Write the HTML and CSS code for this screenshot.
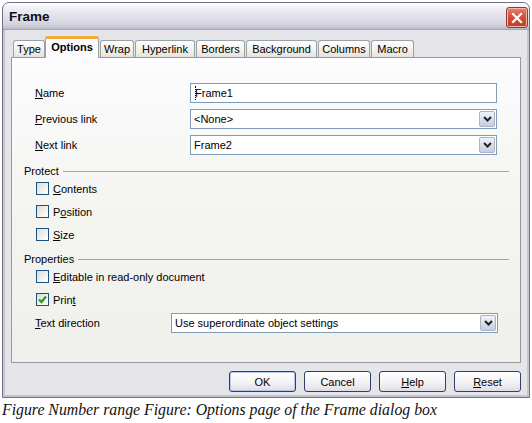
FILE: index.html
```html
<!DOCTYPE html>
<html>
<head>
<meta charset="utf-8">
<title>Frame</title>
<link rel="stylesheet" href="styles.css">
</head>
<body>
<div class="window">
  <div class="titlebar">
    <span class="title">Frame</span>
    <div class="close"><svg class="close-x" width="12" height="12" viewBox="0 0 12 12"><path d="M2 2 L10 10 M10 2 L2 10" stroke="#ffffff" stroke-width="2.2" stroke-linecap="square"/></svg></div>
  </div>
  <div class="client">
    <div class="tabs">
      <div class="tab w-type">Type</div>
      <div class="tab w-options active">Options</div>
      <div class="tab w-wrap">Wrap</div>
      <div class="tab w-hyper">Hyperlink</div>
      <div class="tab w-borders">Borders</div>
      <div class="tab w-bg">Background</div>
      <div class="tab w-cols">Columns</div>
      <div class="tab w-macro">Macro</div>
    </div>
    <div class="panel">
      <div class="field-row">
        <span class="lbl"><u>N</u>ame</span>
        <div class="textbox"><span class="caret"></span>Frame1</div>
      </div>
      <div class="field-row">
        <span class="lbl"><u>P</u>revious link</span>
        <div class="combo"><span class="combo-text">&lt;None&gt;</span><span class="drop"><svg width="9" height="6" viewBox="0 0 9 6"><path d="M1 1 L4.5 4.5 L8 1" fill="none" stroke="#222" stroke-width="2"/></svg></span></div>
      </div>
      <div class="field-row">
        <span class="lbl"><u>N</u>ext link</span>
        <div class="combo"><span class="combo-text">Frame2</span><span class="drop"><svg width="9" height="6" viewBox="0 0 9 6"><path d="M1 1 L4.5 4.5 L8 1" fill="none" stroke="#222" stroke-width="2"/></svg></span></div>
      </div>

      <div class="group-head protect"><span>Protect</span><span class="rule"></span></div>
      <div class="check-row"><span class="cb"></span><span><u>C</u>ontents</span></div>
      <div class="check-row"><span class="cb"></span><span>P<u>o</u>sition</span></div>
      <div class="check-row"><span class="cb"></span><span><u>S</u>ize</span></div>

      <div class="group-head props"><span>Properties</span><span class="rule"></span></div>
      <div class="check-row"><span class="cb"></span><span><u>E</u>ditable in read-only document</span></div>
      <div class="check-row"><span class="cb checked"><svg width="11" height="11" viewBox="0 0 11 11"><path d="M2 5.5 L4.5 8 L9 2.5" fill="none" stroke="#21a121" stroke-width="2.2"/></svg></span><span>Prin<u>t</u></span></div>
      <div class="field-row dir-row">
        <span class="lbl lbl-dir"><u>T</u>ext direction</span>
        <div class="combo"><span class="combo-text">Use superordinate object settings</span><span class="drop"><svg width="9" height="6" viewBox="0 0 9 6"><path d="M1 1 L4.5 4.5 L8 1" fill="none" stroke="#222" stroke-width="2"/></svg></span></div>
      </div>
    </div>
    <div class="buttons">
      <span class="btn default">OK</span>
      <span class="btn">Cancel</span>
      <span class="btn"><u>H</u>elp</span>
      <span class="btn"><u>R</u>eset</span>
    </div>
  </div>
</div>
<p class="caption">Figure Number range Figure: Options page of the Frame dialog box</p>
</body>
</html>
```

FILE: styles.css
```css
html, body {
  margin: 0;
  padding: 0;
  background: #ffffff;
}
body {
  width: 532px;
  height: 423px;
  overflow: hidden;
  font-family: "Liberation Sans", Arial, sans-serif;
  font-size: 11px;
  color: #000;
}
.window {
  margin: 2px 0 0 2px;
  width: 528px;
  height: 396px;
  box-sizing: border-box;
  border: 1px solid #6f6f88;
  border-radius: 7px 7px 0 0;
  background: #c6c6d3;
  display: flex;
  flex-direction: column;
  overflow: hidden;
}
.titlebar {
  height: 27px;
  flex: none;
  box-sizing: border-box;
  display: flex;
  align-items: center;
  justify-content: space-between;
  padding: 0 1px 0 6px;
  background: linear-gradient(#fdfdfe 0%, #ececf2 25%, #dedee7 60%, #d2d2dd 85%, #b9b9c9 100%);
  border-bottom: 1px solid #a3a3b6;
}
.title {
  font-weight: bold;
  font-size: 13.5px;
  color: #101018;
  padding-top: 1px;
}
.close {
  width: 22px;
  height: 21px;
  flex: none;
  box-sizing: border-box;
  margin-top: 3px;
  border: 1px solid #8c3a40;
  border-radius: 3px;
  background: linear-gradient(#e8826c 0%, #d5503f 45%, #c03a2a 100%);
  box-shadow: inset 0 0 0 1px #f2b8ac;
  display: flex;
  align-items: center;
  justify-content: center;
}
.close-x {
  display: block;
}
.client {
  flex: 1;
  margin: 0 2px 2px;
  background: #e5e4e9;
  padding: 7px 6px 0 6px;
  display: flex;
  flex-direction: column;
}
.tabs {
  height: 20px;
  display: flex;
  align-items: flex-end;
  gap: 1px;
  padding-left: 2px;
  position: relative;
  z-index: 1;
}
.tab {
  height: 17px;
  box-sizing: border-box;
  border: 1px solid #9aa2a8;
  border-bottom: none;
  border-radius: 3px 3px 0 0;
  background: linear-gradient(#ffffff, #f0efea 60%, #e4e3dd);
  text-align: center;
  line-height: 16px;
  color: #000;
}
.tab.active {
  height: 22px;
  margin-bottom: -1px;
  margin-left: -1px;
  background: #fcfcfe;
  border-top: 3px solid #f3a83a;
  font-weight: bold;
  line-height: 17px;
}
.w-type { width: 32px; }
.w-options { width: 54px; }
.w-wrap { width: 34px; }
.w-hyper { width: 60px; }
.w-borders { width: 49px; }
.w-bg { width: 71px; }
.w-cols { width: 52px; }
.w-macro { width: 43px; }

.panel {
  height: 306px;
  box-sizing: border-box;
  border: 1px solid #919b9c;
  background: linear-gradient(#fcfcfe, #f4f4f1 50%, #efefeb);
  padding: 25px 11px 0 12px;
  display: flex;
  flex-direction: column;
}
.field-row {
  display: flex;
  align-items: center;
  height: 20px;
  margin-bottom: 6px;
  padding-left: 11px;
  padding-right: 12px;
}
.lbl {
  width: 155px;
  flex: none;
}
.lbl-dir {
  width: 136px;
}
.textbox, .combo {
  flex: 1;
  height: 20px;
  box-sizing: border-box;
  border: 1px solid #7f9db9;
  background: #fff;
  display: flex;
  align-items: center;
}
.textbox {
  padding-left: 4px;
}
.caret {
  display: inline-block;
  width: 0;
  height: 14px;
  border-left: 1px dotted #000;
  margin-right: -1px;
}
.combo-text {
  flex: 1;
  padding-left: 3px;
}
.drop {
  width: 16px;
  height: 16px;
  box-sizing: border-box;
  margin-right: 1px;
  border: 1px solid #aab3c8;
  border-radius: 2px;
  background: linear-gradient(#f0f2f8, #d6dbe8 60%, #c6cddd);
  display: flex;
  align-items: center;
  justify-content: center;
}
.dir-row {
  margin-top: 2px;
  padding-right: 11px;
}
.group-head {
  display: flex;
  align-items: center;
  height: 12px;
  gap: 4px;
}
.group-head.protect {
  margin-top: 4px;
}
.group-head.props {
  margin-top: 7px;
}
.rule {
  flex: 1;
  border-top: 1px solid #a3a3a3;
  margin-top: 1px;
}
.check-row {
  display: flex;
  align-items: center;
  height: 23px;
  padding-left: 12px;
  gap: 4px;
}
.cb {
  width: 13px;
  height: 13px;
  box-sizing: border-box;
  border: 1px solid #1c5180;
  background: linear-gradient(135deg, #dcdcd5, #f6f6f3 70%, #ffffff);
  display: flex;
  align-items: center;
  justify-content: center;
  flex: none;
}
.buttons {
  display: flex;
  justify-content: flex-end;
  gap: 8px;
  margin-top: 8px;
  padding-right: 0;
}
.btn {
  width: 67px;
  height: 21px;
  box-sizing: border-box;
  border: 1px solid #2f3f66;
  border-radius: 3px;
  background: linear-gradient(#ffffff, #f2f2f5 60%, #dcdce4);
  display: flex;
  align-items: center;
  justify-content: center;
}
.btn.default {
  box-shadow: inset 0 0 0 1px #b8c8ec;
}
.caption {
  margin: 3px 0 0 2px;
  font-family: "Liberation Serif", "Times New Roman", serif;
  font-style: italic;
  font-size: 15.8px;
  line-height: 18px;
  color: #111;
  white-space: nowrap;
}
```
